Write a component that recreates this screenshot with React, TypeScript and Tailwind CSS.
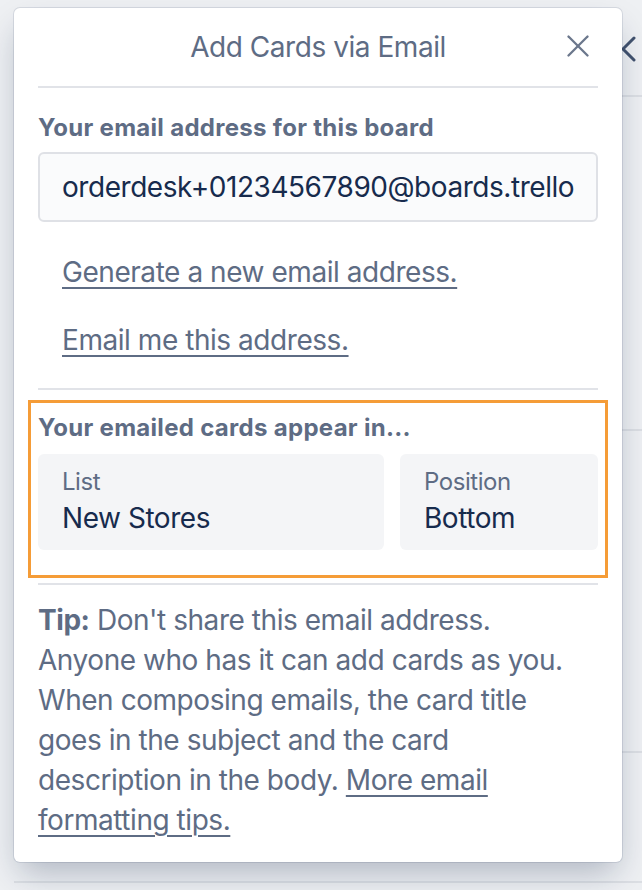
import { X } from 'lucide-react'

export default function App() {
  const font = { fontFamily: 'Inter, "Noto Sans", sans-serif' }

  return (
    <div className="relative w-[642px] h-[890px] overflow-hidden bg-[#eef0f3]" style={font}>
      {/* underlying sidebar */}
      <div className="flex flex-col">
        <div className="h-[97px] border-b-2 border-[#dcdfe4] ml-[14px] pl-[606px] pt-[36px]">
          <svg width="16" height="26" viewBox="0 0 16 26" fill="none">
            <path d="M14 2 L3 13 L14 24" stroke="#42526e" strokeWidth="3" strokeLinecap="round" strokeLinejoin="round" />
          </svg>
        </div>
        <div className="h-[334px] border-b-2 border-[#dcdfe4] ml-[14px]" />
        <div className="h-[322px] border-b-2 border-[#dcdfe4] ml-[14px]" />
        <div className="h-[130px] border-b-2 border-[#dcdfe4] ml-[14px]" />
      </div>

      {/* popover */}
      <div className="absolute left-[14px] top-[8px] w-[608px] bg-white rounded-[6px] shadow-[0_16px_32px_-6px_rgba(9,30,66,0.28),0_0_0_1px_rgba(9,30,66,0.1)] tracking-[-0.45px]">
        <div className="relative h-[80px] mx-6 border-b-2 border-[#e1e3e8] flex items-center justify-center">
          <span className="text-[28px] leading-[40px] text-[#5e6c84]">Add Cards via Email</span>
          <button className="absolute right-[4px] top-[22px] w-8 h-8 flex items-center justify-center text-[#6b778c]">
            <X size={38} strokeWidth={1.5} className="shrink-0" />
          </button>
        </div>

        <div className="px-6">
          <div className="pt-6 text-[24px] leading-[32px] font-bold tracking-[0.3px] text-[#5e6c84]">Your email address for this board</div>
          <div className="mt-2 h-[70px] rounded-[6px] border-2 border-[#dfe1e6] bg-[#fafbfc] px-[22px] flex items-center overflow-hidden">
            <span className="text-[28px] leading-[40px] text-[#172b4d] whitespace-nowrap overflow-hidden">orderdesk+01234567890@boards.trello.com</span>
          </div>

          <div className="pt-[30px] pb-[14px] pl-6 flex flex-col items-start gap-[28px]">
            <a className="text-[28px] leading-[40px] text-[#5e6c84] underline underline-offset-[5px] decoration-2">Generate a new email address.</a>
            <a className="text-[28px] leading-[40px] text-[#5e6c84] underline underline-offset-[5px] decoration-2">Email me this address.</a>
          </div>
          <div className="border-b-2 border-[#e1e3e8] mt-[14px]" />

          <div className="relative pt-[22px] pb-[33px]">
            <div className="absolute left-[-10px] right-[-10px] top-[10px] bottom-[5px] border-[3px] border-[#f59c37]" />
            <div className="text-[24px] leading-[32px] font-bold tracking-[0.3px] text-[#5e6c84]">Your emailed cards appear in...</div>
            <div className="mt-[10px] flex gap-4">
              <div className="w-[346px] rounded-[6px] bg-[#f4f5f7] px-6 py-3">
                <div className="text-[24px] leading-[32px] text-[#5e6c84]">List</div>
                <div className="text-[28px] leading-[40px] text-[#172b4d]">New Stores</div>
              </div>
              <div className="flex-1 rounded-[6px] bg-[#f4f5f7] px-6 py-3">
                <div className="text-[24px] leading-[32px] text-[#5e6c84]">Position</div>
                <div className="text-[28px] leading-[40px] text-[#172b4d]">Bottom</div>
              </div>
            </div>
          </div>
          <div className="border-b-2 border-[#e1e3e8]" />

          <p className="pt-[15px] pb-[22px] text-[28px] leading-[40px] text-[#5e6c84]">
            <span className="font-bold">Tip:</span> Don't share this email address.<br />
            Anyone who has it can add cards as you.<br />
            When composing emails, the card title<br />
            goes in the subject and the card<br />
            description in the body. <a className="underline underline-offset-[5px] decoration-2">More email<br />formatting tips.</a>
          </p>
        </div>
      </div>
    </div>
  )
}
